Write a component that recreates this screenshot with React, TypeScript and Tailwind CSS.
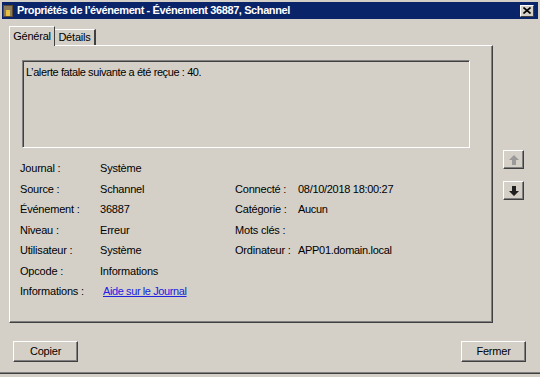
const rows: [string, string, string?, string?][] = [
  ["Journal :", "Système"],
  ["Source :", "Schannel", "Connecté :", "08/10/2018 18:00:27"],
  ["Événement :", "36887", "Catégorie :", "Aucun"],
  ["Niveau :", "Erreur", "Mots clés :", ""],
  ["Utilisateur :", "Système", "Ordinateur :", "APP01.domain.local"],
  ["Opcode :", "Informations"],
];

function ArrowIcon({ up, color }: { up: boolean; color: string }) {
  return (
    <svg width="10" height="10" viewBox="0 0 10 10">
      <path
        d={up ? "M5 0 L10 5 L7 5 L7 10 L3 10 L3 5 L0 5 Z" : "M5 10 L10 5 L7 5 L7 0 L3 0 L3 5 L0 5 Z"}
        fill={color}
      />
    </svg>
  );
}

function ClassicButton({ label }: { label: string }) {
  return (
    <button
      type="button"
      className="w-[65px] h-[21px] border border-t-white border-l-white border-r-[#404040] border-b-[#404040] bg-[#d4d0c8] text-[11px] text-black shadow-[inset_-1px_-1px_0_#808080]"
    >
      {label}
    </button>
  );
}

export default function App() {
  return (
    <div
      className="w-[540px] h-[377px] bg-[#d4d0c8] flex flex-col overflow-hidden text-black tracking-[-0.2px]"
      style={{ fontFamily: '"Liberation Sans", Arial, sans-serif' }}
    >
      {/* title bar */}
      <div className="mt-[2px] mx-[2px] h-[17px] bg-[#0a246a] flex items-center pl-[1px] pr-[4px]">
        <div className="w-[10px] h-[12px] bg-[#8a7a5a] border border-[#5a4a30] flex items-end justify-center">
          <div className="w-[4px] h-[6px] bg-[#e8c040]" />
        </div>
        <span className="ml-[4px] text-[11px] font-bold text-white tracking-[-0.4px]">
          Propriétés de l’événement - Événement 36887, Schannel
        </span>
        <div className="ml-auto w-[14px] h-[12px] bg-[#d4d0c8] border border-t-white border-l-white border-r-[#404040] border-b-[#404040] flex items-center justify-center">
          <svg width="8" height="7" viewBox="0 0 8 7">
            <path d="M0.5 0.5 L7.5 6.5 M7.5 0.5 L0.5 6.5" stroke="#000" strokeWidth="1.6" />
          </svg>
        </div>
      </div>

      {/* body */}
      <div className="flex mt-[6px]">
        <div className="ml-[9px] w-[484px] flex flex-col">
          <div className="h-[20px] flex items-end">
            <div className="h-[20px] w-[46px] border-t border-l border-t-white border-l-white border-r border-r-[#404040] flex items-center justify-center text-[11px] bg-[#d4d0c8] relative -mb-px z-10">
              Général
            </div>
            <div className="h-[16px] w-[41px] border-t border-t-white border-r-2 border-r-[#404040] flex items-center justify-center text-[11px]">
              Détails
            </div>
          </div>
          <div className="h-[278px] border border-t-white border-l-white border-r-[#404040] border-b-[#404040] shadow-[inset_-1px_-1px_0_#808080] px-[10px] pt-[14px]">
            <div className="ml-[2px] w-[448px] h-[88px] border border-t-[#808080] border-l-[#808080] border-r-white border-b-white shadow-[inset_1px_1px_0_#404040] px-[3px] pt-[3px] text-[11px] tracking-[-0.4px]">
              L’alerte fatale suivante a été reçue : 40.
            </div>
            <div className="mt-[10px] grid grid-cols-[80px_135px_63px_1fr] text-[11px]">
              {rows.map(([l, v, l2, v2]) => (
                <div key={l} className="contents">
                  <div className="h-[20.5px] flex items-center">{l}</div>
                  <div className="h-[20.5px] flex items-center">{v}</div>
                  <div className="h-[20.5px] flex items-center">{l2 ?? ""}</div>
                  <div className="h-[20.5px] flex items-center tracking-[-0.3px]">{v2 ?? ""}</div>
                </div>
              ))}
              <div className="h-[20.5px] flex items-center">Informations :</div>
              <div className="h-[20.5px] flex items-center col-span-3">
                <a href="#" className="ml-[3px] text-[#2020e0] underline tracking-[-0.4px]">
                  Aide sur le Journal
                </a>
              </div>
            </div>
          </div>
        </div>
        <div className="ml-[10px] pt-[125px] flex flex-col gap-[12px]">
          <div className="w-[21px] h-[19px] border border-t-white border-l-white border-r-[#404040] border-b-[#404040] shadow-[inset_-1px_-1px_0_#808080] flex items-center justify-center">
            <ArrowIcon up color="#9a9a9a" />
          </div>
          <div className="w-[21px] h-[19px] border border-t-white border-l-white border-r-[#404040] border-b-[#404040] shadow-[inset_-1px_-1px_0_#808080] flex items-center justify-center">
            <ArrowIcon up={false} color="#202020" />
          </div>
        </div>
      </div>

      {/* footer */}
      <div className="mt-[18px] flex justify-between pl-[13px] pr-[14px]">
        <ClassicButton label="Copier" />
        <ClassicButton label="Fermer" />
      </div>
      <div className="mt-[10px] h-px bg-[#808080]" />
      <div className="h-px bg-[#404040]" />
    </div>
  );
}
